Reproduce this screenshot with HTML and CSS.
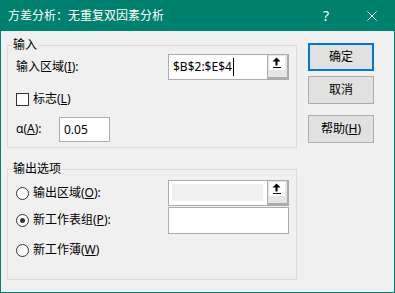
FILE: index.html
```html
<!DOCTYPE html>
<html lang="zh-CN">
<head>
    <meta charset="UTF-8">
    <title>方差分析：无重复双因素分析</title>
    <link rel="stylesheet" href="styles.css">
</head>
<body>
    <div class="dialog">
        <div class="titlebar">
            <span class="title">方差分析：无重复双因素分析</span>
            <span class="tb-btn">?</span>
            <span class="tb-btn">
                <svg width="10" height="10" viewBox="0 0 10 10"><path d="M0.5 0.5 L9.5 9.5 M9.5 0.5 L0.5 9.5" stroke="#fff" stroke-width="1"/></svg>
            </span>
        </div>
        <div class="content">
            <div class="options">
                <fieldset class="group group-input">
                    <legend>输入</legend>
                    <div class="row row-range">
                        <label class="lbl">输入区域(<u>I</u>):</label>
                        <div class="ref">
                            <div class="ref-text">$B$2:$E$4<span class="caret"></span></div>
                            <div class="picker">
                                <span class="picker-face">
                                    <svg width="16" height="14" viewBox="0 0 16 14"><path d="M7.5 1.5 L3.5 5.5 H6.5 V9.5 H8.5 V5.5 H11.5 Z" fill="#000"/><rect x="4" y="11" width="8" height="1" fill="#000"/></svg>
                                </span>
                            </div>
                        </div>
                    </div>
                    <div class="row row-check">
                        <span class="checkbox"></span>
                        <label>标志(<u>L</u>)</label>
                    </div>
                    <div class="row row-alpha">
                        <label class="lbl-short">α(<u>A</u>):</label>
                        <div class="field alpha">0.05</div>
                    </div>
                </fieldset>

                <fieldset class="group group-output">
                    <legend>输出选项</legend>
                    <div class="row row-out1">
                        <div class="choice"><span class="radio"></span><label>输出区域(<u>O</u>):</label></div>
                        <div class="ref">
                            <div class="ref-text"><span class="ref-disabled"></span></div>
                            <div class="picker">
                                <span class="picker-face">
                                    <svg width="16" height="14" viewBox="0 0 16 14"><path d="M7.5 1.5 L3.5 5.5 H6.5 V9.5 H8.5 V5.5 H11.5 Z" fill="#000"/><rect x="4" y="11" width="8" height="1" fill="#000"/></svg>
                                </span>
                            </div>
                        </div>
                    </div>
                    <div class="row row-out2">
                        <div class="choice"><span class="radio checked"></span><label>新工作表组(<u>P</u>):</label></div>
                        <div class="field sheet"></div>
                    </div>
                    <div class="row row-out3">
                        <div class="choice"><span class="radio"></span><label>新工作薄(<u>W</u>)</label></div>
                    </div>
                </fieldset>
            </div>

            <div class="actions">
                <button class="btn default">确定</button>
                <button class="btn">取消</button>
                <button class="btn help">帮助(<u>H</u>)</button>
            </div>
        </div>
    </div>
</body>
</html>
```

FILE: styles.css
```css
body {
    margin: 0;
    font-family: "Noto Sans", "Noto Sans CJK SC", sans-serif;
    font-size: 12px;
    color: #000;
}
.dialog {
    width: 395px;
    height: 293px;
    box-sizing: border-box;
    border: 1px solid #00806e;
    border-top: none;
    background-color: #f0f0f0;
}
.titlebar {
    height: 31px;
    display: flex;
    align-items: center;
    background-color: #00806e;
    color: #fff;
    padding-left: 8px;
    margin: 0 -1px;
}
.title {
    flex: 1;
    line-height: 16px;
}
.tb-btn {
    width: 46px;
    height: 31px;
    display: flex;
    align-items: center;
    justify-content: center;
    font-size: 14px;
}
.content {
    display: flex;
    padding: 6px 0 0 6px;
}
.options {
    width: 290px;
}
.group {
    margin: 0;
    padding: 0 0 6px 8px;
    border: 1px solid #dcdcdc;
}
.group legend {
    margin-left: -4px;
    padding: 0 1px;
    line-height: 16px;
}
.group-output {
    margin-top: 13px;
    padding-bottom: 17px;
}
.row {
    display: flex;
    align-items: center;
    line-height: 16px;
}
.row-range { margin-top: 1px; height: 26px; }
.row-check { margin-top: 7px; height: 24px; }
.row-alpha { margin-top: 6px; height: 24px; }
.row-out1 { margin-top: 3px; height: 26px; }
.row-out2 { margin-top: 1px; height: 26px; }
.row-out3 { margin-top: 5px; height: 24px; }

.lbl, .choice {
    width: 152px;
    display: flex;
    align-items: center;
}
.lbl-short {
    width: 43px;
}
.ref {
    width: 121px;
    height: 26px;
    box-sizing: border-box;
    border: 1px solid #adadad;
    background: #fff;
    display: flex;
}
.ref-text {
    flex: 1;
    display: flex;
    align-items: center;
    padding-left: 4px;
}
.caret {
    display: inline-block;
    width: 1px;
    height: 18px;
    background: #000;
    margin-left: 1px;
}
.ref-disabled {
    display: block;
    height: 17px;
    flex: 1;
    margin: 0 4px 1px -1px;
    background: #f0f0f0;
}
.picker {
    width: 22px;
    box-sizing: border-box;
    border-left: 1px solid #adadad;
    border-right: 2px solid #adadad;
    border-bottom: 2px solid #adadad;
    margin-right: -1px;
    background: #e5e5e5;
    padding: 1px 0 0 1px;
}
.picker-face {
    display: block;
    width: 16px;
    height: 14px;
    background: #fff;
}
.picker-face svg {
    display: block;
}
.field {
    box-sizing: border-box;
    border: 1px solid #adadad;
    background: #fff;
}
.alpha {
    width: 51px;
    height: 25px;
    padding-left: 4px;
    line-height: 23px;
}
.sheet {
    width: 121px;
    height: 27px;
}
.checkbox, .radio {
    width: 13px;
    height: 13px;
    box-sizing: border-box;
    border: 1px solid #333;
    background: #fff;
    margin-right: 4px;
    flex-shrink: 0;
}
.radio {
    border-radius: 50%;
    display: flex;
    align-items: center;
    justify-content: center;
}
.radio.checked::after {
    content: "";
    width: 5px;
    height: 5px;
    border-radius: 50%;
    background: #333;
}
.actions {
    display: flex;
    flex-direction: column;
    margin: 6px 0 0 11px;
}
.btn {
    width: 66px;
    height: 28px;
    box-sizing: border-box;
    border: 1px solid #adadad;
    background-color: #e1e1e1;
    font-family: inherit;
    font-size: 12px;
    line-height: 16px;
    padding: 0;
    margin-bottom: 5px;
}
.btn.default {
    border: 2px solid #0078d7;
}
.btn.help {
    margin-top: 6px;
}
```
